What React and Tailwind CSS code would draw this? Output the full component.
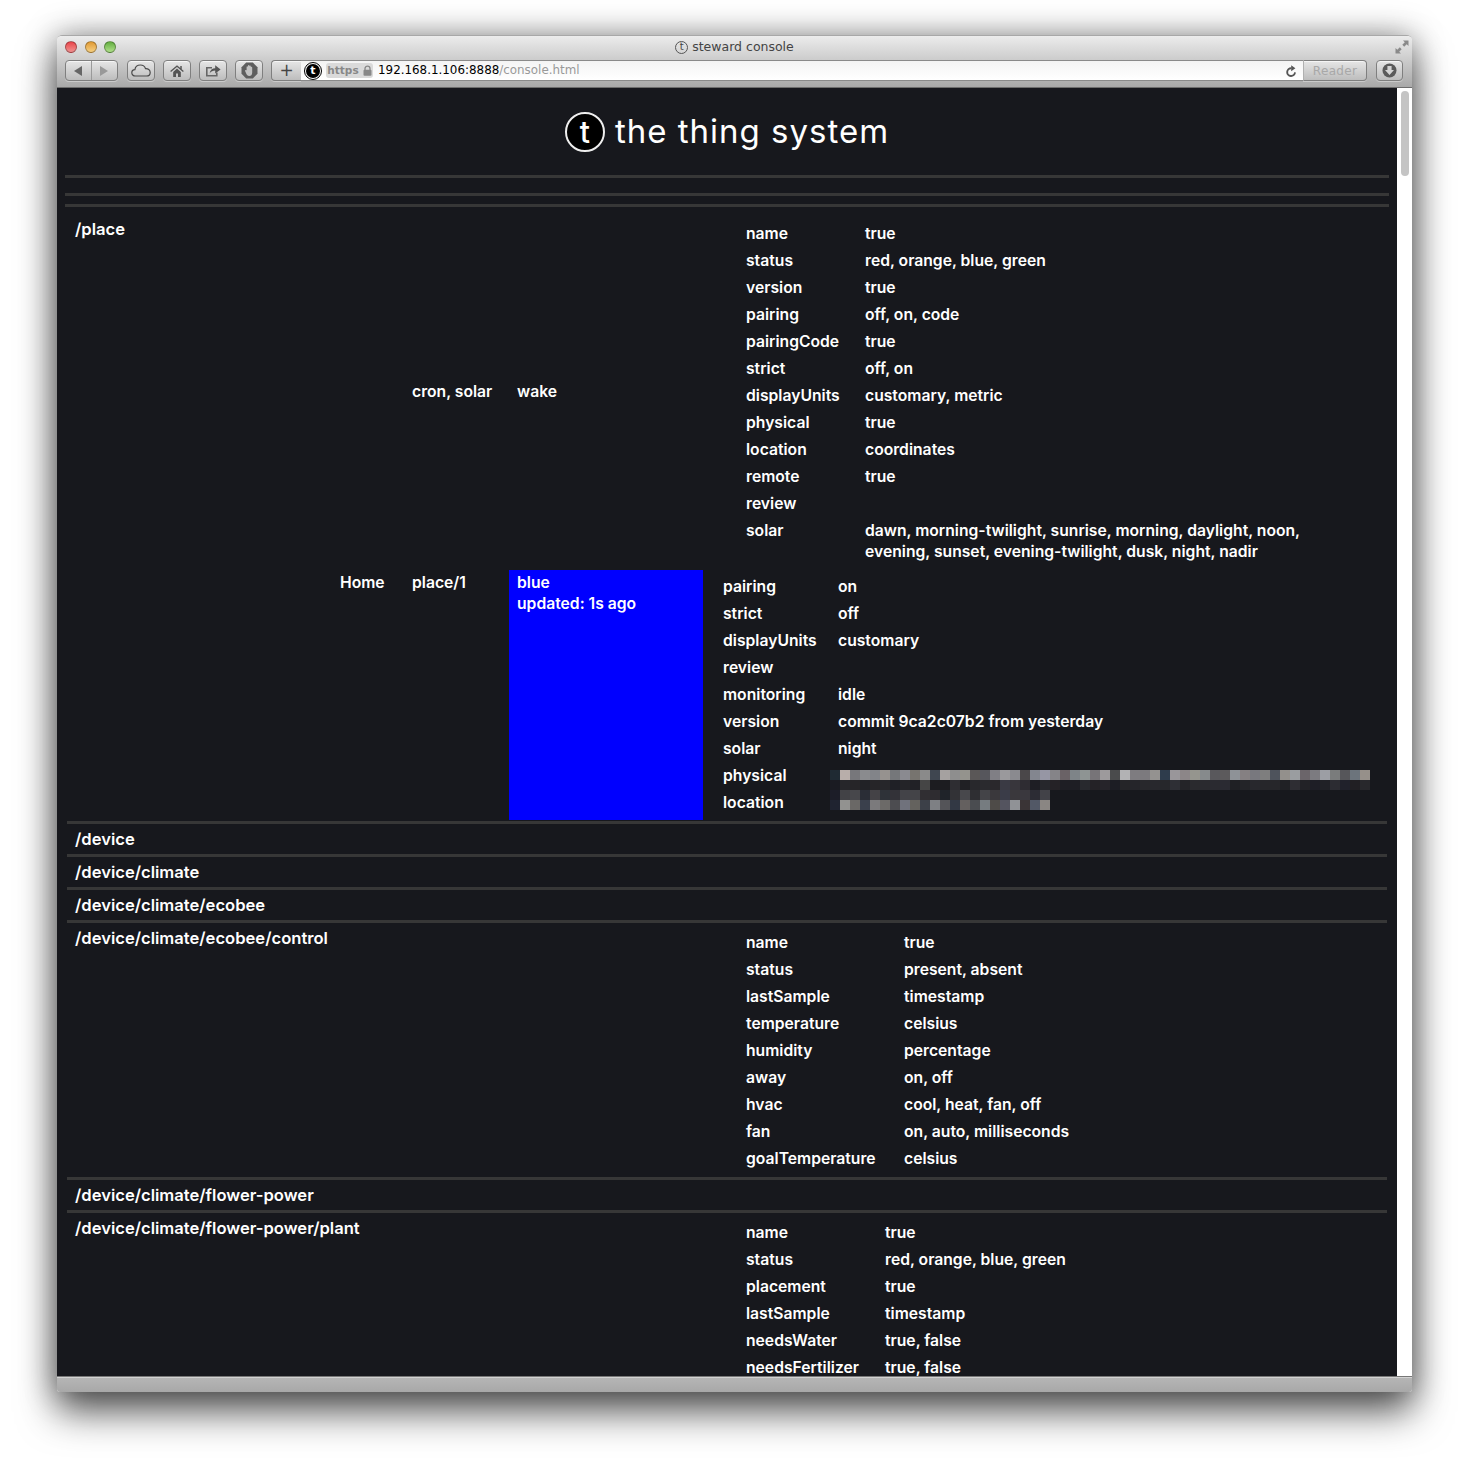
import React from 'react';

const placeProps = [
  ['name', 'true'],
  ['status', 'red, orange, blue, green'],
  ['version', 'true'],
  ['pairing', 'off, on, code'],
  ['pairingCode', 'true'],
  ['strict', 'off, on'],
  ['displayUnits', 'customary, metric'],
  ['physical', 'true'],
  ['location', 'coordinates'],
  ['remote', 'true'],
  ['review', ''],
  ['solar', 'dawn, morning-twilight, sunrise, morning, daylight, noon,\nevening, sunset, evening-twilight, dusk, night, nadir'],
];

const homeProps = [
  ['pairing', 'on'],
  ['strict', 'off'],
  ['displayUnits', 'customary'],
  ['review', ''],
  ['monitoring', 'idle'],
  ['version', 'commit 9ca2c07b2 from yesterday'],
  ['solar', 'night'],
];

const ecobeeProps = [
  ['name', 'true'],
  ['status', 'present, absent'],
  ['lastSample', 'timestamp'],
  ['temperature', 'celsius'],
  ['humidity', 'percentage'],
  ['away', 'on, off'],
  ['hvac', 'cool, heat, fan, off'],
  ['fan', 'on, auto, milliseconds'],
  ['goalTemperature', 'celsius'],
];

const plantProps = [
  ['name', 'true'],
  ['status', 'red, orange, blue, green'],
  ['placement', 'true'],
  ['lastSample', 'timestamp'],
  ['needsWater', 'true, false'],
  ['needsFertilizer', 'true, false'],
];

// pixelated blocks hiding the address and coordinates
const mosaicPhysical = [
  ['#1f2a33', '#b8aeaa', '#77777b', '#8a8b8e', '#828489', '#96928f', '#75777a', '#8a8a90', '#77746f', '#8a8a8a', '#3f4650', '#a5a1a0', '#8e8e8e', '#94938d', '#5a5757', '#56565c', '#807f85', '#9a999c', '#8a8a8f', '#4a4749', '#83868f', '#9696a4', '#858488', '#6a6266', '#7e8488', '#8e9493', '#777478', '#9d9a9c', '#4a4b4c', '#b2b2b4', '#7e7c80', '#7c7a7e', '#949290', '#2e3c4c', '#99969a', '#8c8688', '#95958e', '#868a8c', '#59585c', '#5c5a5c', '#8e9297', '#858082', '#78787e', '#7e7e7e', '#4e535c', '#93908c', '#9a9da0', '#6b656a', '#7c7b80', '#9c9ea4', '#7a7c7c', '#56565a', '#6c747c', '#96908a'],
  ['#1a1b22', '#26262a', '#262528', '#212226', '#262528', '#26262a', '#1f2026', '#242428', '#212126', '#454545', '#1c1c20', '#1c1c20', '#2e2d32', '#202024', '#28282c', '#2a2a2e', '#2a282c', '#3a3a44', '#38363c', '#2e2c32', '#1e1e24', '#26272c', '#252226', '#1e1e24', '#1e1e24', '#28292e', '#242226', '#26242a', '#1c1d24', '#252528', '#25252a', '#28282c', '#28282d', '#26272b', '#2e2f35', '#242428', '#2a2a2e', '#2a2a2f', '#2a2a30', '#2a2a32', '#1f2024', '#232428', '#28282d', '#26262a', '#26262a', '#202125', '#2e2d33', '#222226', '#1e1e26', '#202126', '#2c2c32', '#20212b', '#211f23', '#28282c'],
];

const mosaicLocation = [
  ['#1c1d28', '#424246', '#47474b', '#2a2d36', '#444246', '#2e3238', '#333238', '#434348', '#444448', '#302e32', '#2e2c30', '#1f2329', '#323236', '#48484c', '#2e2e32', '#444448', '#3a383c', '#3a3c48', '#3a383c', '#3a383e', '#2c2c34', '#424248'],
  ['#1f2330', '#929290', '#6a6866', '#3a404c', '#7b7a7c', '#6c6a68', '#4c4c50', '#70727c', '#64625e', '#3c4048', '#7e8084', '#545458', '#323844', '#64605f', '#4a4c50', '#767c80', '#4e4b48', '#54545f', '#909296', '#3a3436', '#525866', '#8a8683'],
];

const Mosaic = ({ rows, className }) => (
  <svg className={className} width={rows[0].length * 10} height={rows.length * 10} shapeRendering="crispEdges">
    {rows.map((row, y) =>
      row.map((color, x) => <rect key={`${x}-${y}`} x={x * 10} y={y * 10} width="10" height="10" fill={color} />)
    )}
  </svg>
);

const PropRow = ({ name, keyWidth, children }) => (
  <div className="flex py-[3px] leading-[21px]">
    <div className="shrink-0" style={{ width: keyWidth }}>{name}</div>
    <div className="relative whitespace-pre-line">{children}</div>
  </div>
);

const Props = ({ rows, keyWidth }) => (
  <div>
    {rows.map(([name, value]) => (
      <PropRow key={name} name={name} keyWidth={keyWidth}>{value}</PropRow>
    ))}
  </div>
);

const Rule = ({ wide }) => <div className={`h-[3px] bg-[#373737] ${wide ? 'mx-2' : 'mx-2.5'}`} />;

const SimpleSection = ({ path }) => (
  <div className="px-2 py-[4.5px] text-[16.6px] leading-[21px]">{path}</div>
);

const DeviceSection = ({ path, rows, keyWidth, bottom }) => (
  <div className={`flex pl-2 pt-[4.5px] ${bottom}`}>
    <div className="w-[671px] shrink-0 text-[16.6px] leading-[21px]">{path}</div>
    <div className="pt-px">
      <Props rows={rows} keyWidth={keyWidth} />
    </div>
  </div>
);

const ToolButton = ({ className = 'w-7', children }) => (
  <div className={`flex h-[21px] shrink-0 items-center justify-center rounded-[4px] border border-[#7f7f7f] bg-gradient-to-b from-[#e6e6e6] to-[#bdbdbd] shadow-[inset_0_1px_0_rgba(255,255,255,0.6),0_1px_0_rgba(255,255,255,0.35)] ${className}`}>
    {children}
  </div>
);

const CloudIcon = () => (
  <svg width="20" height="13" viewBox="0 0 20 13" fill="none" stroke="#4a4a4a" strokeWidth="1.2">
    <path d="M4.5 12 C2 12 .8 10.4 .8 8.7 C.8 6.9 2.2 5.6 3.9 5.6 C4.3 3 6.6 1 9.4 1 C11.8 1 13.8 2.4 14.5 4.6 C17 4.4 19.2 6 19.2 8.4 C19.2 10.6 17.6 12 15.4 12 Z" />
  </svg>
);

const HomeIcon = () => (
  <svg width="14" height="14" viewBox="0 0 15 14" fill="#555">
    <path d="M7.5 .8 L11 3.8 V1.6 H12.6 V5.2 L14.8 7.1 L13.9 8.1 L7.5 2.7 L1.1 8.1 L.2 7.1 Z" />
    <path fillRule="evenodd" d="M3.4 8 L7.5 4.4 L11.6 8 V13.4 H8.6 V9.6 H6.4 V13.4 H3.4 Z" />
  </svg>
);

const ShareIcon = () => (
  <svg width="16" height="13" viewBox="0 0 16 13">
    <path d="M1 3 H7 V4.6 H2.6 V11 H11 V8.4 H12.6 V12.6 H1 Z" fill="#666" />
    <path d="M4.6 9.4 C5 6 7.4 4.2 10.2 4.2 V1.2 L15.6 5.4 L10.2 9.6 V6.6 C8 6.6 6 7.4 4.6 9.4 Z" fill="#555" />
  </svg>
);

const StopIcon = () => (
  <svg width="17" height="17" viewBox="0 0 17 17">
    <path d="M5.2 .5 H11.8 L16.5 5.2 V11.8 L11.8 16.5 H5.2 L.5 11.8 V5.2 Z" fill="#5e5e5e" />
    <path d="M5.6 8 V5 C5.6 4 7 4 7 5 V3.8 C7 2.8 8.4 2.8 8.4 3.8 V4.2 C8.4 3.4 9.8 3.4 9.8 4.2 V5.2 C9.8 4.6 11.2 4.6 11.2 5.4 V10.4 C11.2 12.6 10 14 8.2 14 C6.6 14 5.8 13 5.2 11.6 L4.2 9.2 C3.8 8.2 5 7.6 5.6 8.6 Z" fill="#c2c2c2" />
  </svg>
);

const ReloadIcon = () => (
  <svg width="11" height="12" viewBox="0 0 11 12" fill="none">
    <path d="M9 7.4 A3.9 3.9 0 1 1 5.4 3.2" stroke="#555" strokeWidth="1.9" />
    <path d="M5.2 .2 L9.4 3.2 L5.2 6.2 Z" fill="#555" />
  </svg>
);

const DownloadIcon = () => (
  <svg width="15" height="15" viewBox="0 0 15 15">
    <circle cx="7.5" cy="7.5" r="7" fill="#5a5a5a" />
    <path d="M5.4 3 H9.6 V7 H12 L7.5 12 L3 7 H5.4 Z" fill="#d4d4d4" />
  </svg>
);

const FullscreenIcon = () => (
  <svg width="14" height="14" viewBox="0 0 14 14" fill="#8a8a8a">
    <path d="M8 .5 H13.5 V6 L11.7 4.2 L9.2 6.7 L7.3 4.8 L9.8 2.3 Z" />
    <path d="M.5 8 V13.5 H6 L4.2 11.7 L6.7 9.2 L4.8 7.3 L2.3 9.8 Z" />
  </svg>
);

const TrafficLight = ({ className }) => (
  <div className={`h-3 w-3 rounded-full border border-black/30 ${className}`} />
);

export default function App() {
  return (
    <div className="h-[1471px] w-full overflow-hidden bg-white pl-[57px] pt-[35px]">
      <div className="flex h-[1357px] w-[1355px] flex-col overflow-hidden rounded-t-[5px] rounded-b-[3px] border-t border-[#a8a8a8] shadow-[0_20px_38px_rgba(0,0,0,0.62),0_0_32px_rgba(0,0,0,0.38)]">
        {/* safari toolbar */}
        <div className="h-[52px] shrink-0 border-b border-[#6e6e6e] bg-gradient-to-b from-[#ececec] to-[#a9a9a9] font-['DejaVu_Sans',sans-serif]">
          <div className="flex h-6 items-center pb-[2px]">
            <div className="flex w-[90px] items-center gap-[7.5px] pl-2">
              <TrafficLight className="bg-gradient-to-b from-[#e8424a] to-[#f09090]" />
              <TrafficLight className="bg-gradient-to-b from-[#e09a30] to-[#f6d080]" />
              <TrafficLight className="bg-gradient-to-b from-[#62ae3e] to-[#b0e08a]" />
            </div>
            <div className="flex flex-1 items-center justify-center gap-1 text-[12.5px] text-[#444]">
              <div className="flex h-[13px] w-[13px] items-center justify-center rounded-full border border-[#555] text-[10px] leading-none">t</div>
              steward console
            </div>
            <div className="w-[90px] pr-[3px]">
              <div className="flex justify-end"><FullscreenIcon /></div>
            </div>
          </div>
          <div className="flex items-start pl-2 pr-[9px]">
            <ToolButton className="w-[53px]">
              <div className="flex h-full w-1/2 items-center justify-center border-r border-[#9a9a9a]">
                <div className="h-0 w-0 border-y-[5px] border-r-[8px] border-y-transparent border-r-[#666]" />
              </div>
              <div className="flex h-full w-1/2 items-center justify-center">
                <div className="h-0 w-0 border-y-[5px] border-l-[8px] border-y-transparent border-l-[#999]" />
              </div>
            </ToolButton>
            <ToolButton className="ml-[9px] w-7"><CloudIcon /></ToolButton>
            <ToolButton className="ml-2 w-7"><HomeIcon /></ToolButton>
            <ToolButton className="ml-2 w-7"><ShareIcon /></ToolButton>
            <ToolButton className="ml-2 w-7"><StopIcon /></ToolButton>
            <ToolButton className="ml-2 w-[30px] rounded-r-none border-r-0">
              <span className="text-[17px] leading-none text-[#444]">+</span>
            </ToolButton>
            <div className="flex h-[21px] min-w-0 flex-1 items-center border-y border-[#8a8a8a] bg-gradient-to-b from-[#f4f4f4] to-white pl-[5px] pr-[6px] text-[11.9px]">
              <div className="flex h-[14px] w-[14px] shrink-0 items-center justify-center rounded-full bg-black text-[11px] font-bold leading-none text-white outline outline-1 outline-black outline-offset-[1px]">t</div>
              <div className="ml-[6px] flex h-[15px] w-[47px] shrink-0 items-center justify-center gap-1 rounded-[3px] bg-[#dadada] text-[10.5px] font-bold text-[#888]">
                https
                <svg width="9" height="11" viewBox="0 0 9 11">
                  <path d="M2 5 V3.4 C2 .4 7 .4 7 3.4 V5" fill="none" stroke="#888" strokeWidth="1.3" />
                  <rect x=".5" y="4.8" width="8" height="6" rx="1" fill="#888" />
                </svg>
              </div>
              <span className="ml-[5px] pt-px text-black">192.168.1.106:8888</span>
              <span className="pt-px text-[#999]">/console.html</span>
              <div className="flex-1" />
              <ReloadIcon />
            </div>
            <ToolButton className="w-16 rounded-l-none border-l border-l-[#b0b0b0]">
              <span className="text-[12px] tracking-[0.3px] text-[#a8a8a8]">Reader</span>
            </ToolButton>
            <ToolButton className="ml-[9px] w-[27px]"><DownloadIcon /></ToolButton>
          </div>
        </div>

        <div className="flex min-h-0 flex-1">
          {/* page */}
          <div className="min-w-0 flex-1 overflow-hidden bg-[#17181d] font-['Inter',sans-serif] text-[15.7px] font-semibold text-white">
            <div className="flex h-[87px] items-start justify-center gap-[10px] pt-6">
              <div className="flex h-10 w-10 items-center justify-center rounded-full border-2 border-[#eeeeee] bg-black text-[30px] font-medium leading-none">t</div>
              <div className="-mt-px text-[33px] font-normal leading-10 tracking-[1px]">the thing system</div>
            </div>
            <Rule wide />
            <div className="h-[15px]" />
            <Rule wide />
            <div className="h-2" />
            <Rule wide />

            <div className="flex pb-px pl-[18px] pt-[12.5px]">
              <div className="-mt-px w-[265px] shrink-0 text-[16.6px] leading-[21px]">/place</div>
              <div>
                <div className="flex items-center">
                  <div className="w-[72px]" />
                  <div className="w-[105px]">cron, solar</div>
                  <div className="w-[229px]">wake</div>
                  <Props rows={placeProps} keyWidth={119} />
                </div>
                <div className="mt-[5.5px] flex">
                  <div className="w-[72px] pt-[1.5px] leading-[21px]">Home</div>
                  <div className="w-[97px] pt-[1.5px] leading-[21px]">place/1</div>
                  <div className="h-[250px] w-[194px] bg-[#0000ff] px-2 pt-[1.5px] leading-[21px]">
                    blue
                    <br />
                    updated: 1s ago
                  </div>
                  <div className="ml-5 pt-[2.5px]">
                    <Props rows={homeProps} keyWidth={115} />
                    <PropRow name="physical" keyWidth={115}>
                      <Mosaic rows={mosaicPhysical} className="absolute left-[-8px] top-[5px] max-w-none" />
                      &nbsp;
                    </PropRow>
                    <PropRow name="location" keyWidth={115}>
                      <Mosaic rows={mosaicLocation} className="absolute left-[-8px] top-[-2px] max-w-none" />
                      &nbsp;
                    </PropRow>
                  </div>
                </div>
              </div>
            </div>

            <Rule />
            <div className="pl-2.5">
              <SimpleSection path="/device" />
            </div>
            <Rule />
            <div className="pl-2.5">
              <SimpleSection path="/device/climate" />
            </div>
            <Rule />
            <div className="pl-2.5">
              <SimpleSection path="/device/climate/ecobee" />
            </div>
            <Rule />
            <div className="pl-2.5">
              <DeviceSection path="/device/climate/ecobee/control" rows={ecobeeProps} keyWidth={158} bottom="pb-[5.5px]" />
            </div>
            <Rule />
            <div className="pl-2.5">
              <SimpleSection path="/device/climate/flower-power" />
            </div>
            <Rule />
            <div className="pl-2.5">
              <DeviceSection path="/device/climate/flower-power/plant" rows={plantProps} keyWidth={139} bottom="" />
            </div>
          </div>

          {/* scrollbar */}
          <div className="w-[15px] shrink-0 bg-white pl-1 pt-[3px]">
            <div className="h-[85px] w-2 rounded-full bg-[#c4c4c4]" />
          </div>
        </div>

        <div className="h-4 shrink-0 border-t border-[#777] bg-gradient-to-b from-[#b6b6b6] to-[#a8a8a8] shadow-[inset_0_1px_0_rgba(255,255,255,0.4)]" />
      </div>
    </div>
  );
}
